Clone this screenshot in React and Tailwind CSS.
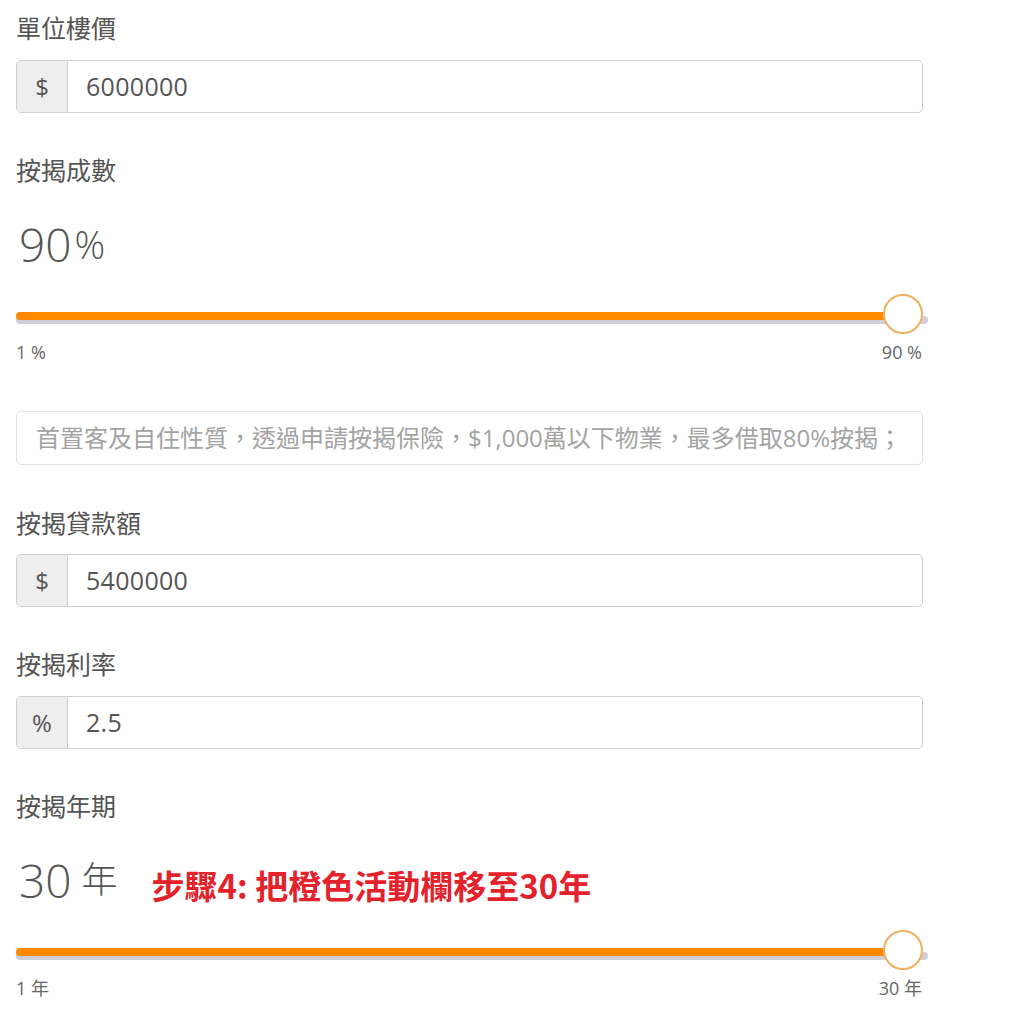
import React from "react";

const FONT = { fontFamily: '"Open Sans", "Noto Sans CJK TC", sans-serif' };

function Label({ children, className = "" }) {
  return (
    <div className={`h-[36px] leading-[36px] text-[25px] text-[#555] ${className}`}>{children}</div>
  );
}

function PrefixInput({ prefix, value, className = "" }) {
  return (
    <div className={`flex h-[53px] w-[907px] rounded-[5px] border border-[#cfcfcf] overflow-hidden bg-white ${className}`}>
      <div className="flex w-[51px] shrink-0 items-center justify-center bg-[#eeeeee] border-r border-[#cfcfcf] text-[24px] text-[#555]">
        {prefix}
      </div>
      <div className="flex items-center pl-[18px] text-[25px] text-[#555] tracking-[0.3px]">{value}</div>
    </div>
  );
}

function Slider({ className = "" }) {
  return (
    <div className={`relative h-[40px] w-[912px] ${className}`}>
      <div className="absolute left-0 right-0 top-[22px] h-[8px] rounded-full bg-[#cfcfd6]" />
      <div className="absolute left-0 right-[25px] top-[18px] h-[8px] rounded-full bg-[#ff8a00]" />
      <div className="absolute right-[5px] top-0 h-[40px] w-[40px] rounded-full bg-white border-2 border-[#f0b060]" />
    </div>
  );
}

function Range({ min, max, className = "" }) {
  return (
    <div className={`flex h-[24px] w-[906px] items-center justify-between text-[18px] text-[#666] ${className}`}>
      <span>{min}</span>
      <span>{max}</span>
    </div>
  );
}

export default function App() {
  return (
    <div lang="zh-Hant" className="min-h-screen bg-white pl-4 pt-[10px]" style={FONT}>
      <Label>單位樓價</Label>
      <PrefixInput prefix="$" value="6000000" className="mt-[14px]" />

      <Label className="mt-[39px]">按揭成數</Label>
      <div className="mt-[26px] flex h-[60px] items-center pl-[3px] text-[#555] font-light">
        <span className="text-[46px] leading-[60px]">90</span>
        <span className="text-[38px] leading-[60px] ml-[3px]">%</span>
      </div>
      <Slider className="mt-[20px]" />
      <Range min="1 %" max="90 %" className="mt-[6px]" />

      <div className="mt-[47px] flex h-[54px] w-[907px] items-center rounded-[5px] border border-[#e2e2e2] pl-[19px] text-[24px] text-[#a3a3a3] whitespace-nowrap overflow-hidden">
        首置客及自住性質，透過申請按揭保險，$1,000萬以下物業，最多借取80%按揭；
      </div>

      <Label className="mt-[40px]">按揭貸款額</Label>
      <PrefixInput prefix="$" value="5400000" className="mt-[13px]" />

      <Label className="mt-[39px]">按揭利率</Label>
      <PrefixInput prefix="%" value="2.5" className="mt-[14px]" />

      <Label className="mt-[39px]">按揭年期</Label>
      <div className="mt-[26px] flex h-[60px] items-center pl-[3px] text-[#555] font-light">
        <span className="text-[46px] leading-[60px]">30</span>
        <span className="text-[36px] leading-[60px] ml-[10px]">年</span>
        <span
          className="ml-[34px] mt-[10px] text-[33px] font-bold text-[#e3222c] leading-[60px]"
          style={{ fontFamily: '"Noto Sans CJK TC", sans-serif' }}
        >
          步驟4: 把橙色活動欄移至30年
        </span>
      </div>
      <Slider className="mt-[20px]" />
      <Range min="1 年" max="30 年" className="mt-[6px]" />
    </div>
  );
}
